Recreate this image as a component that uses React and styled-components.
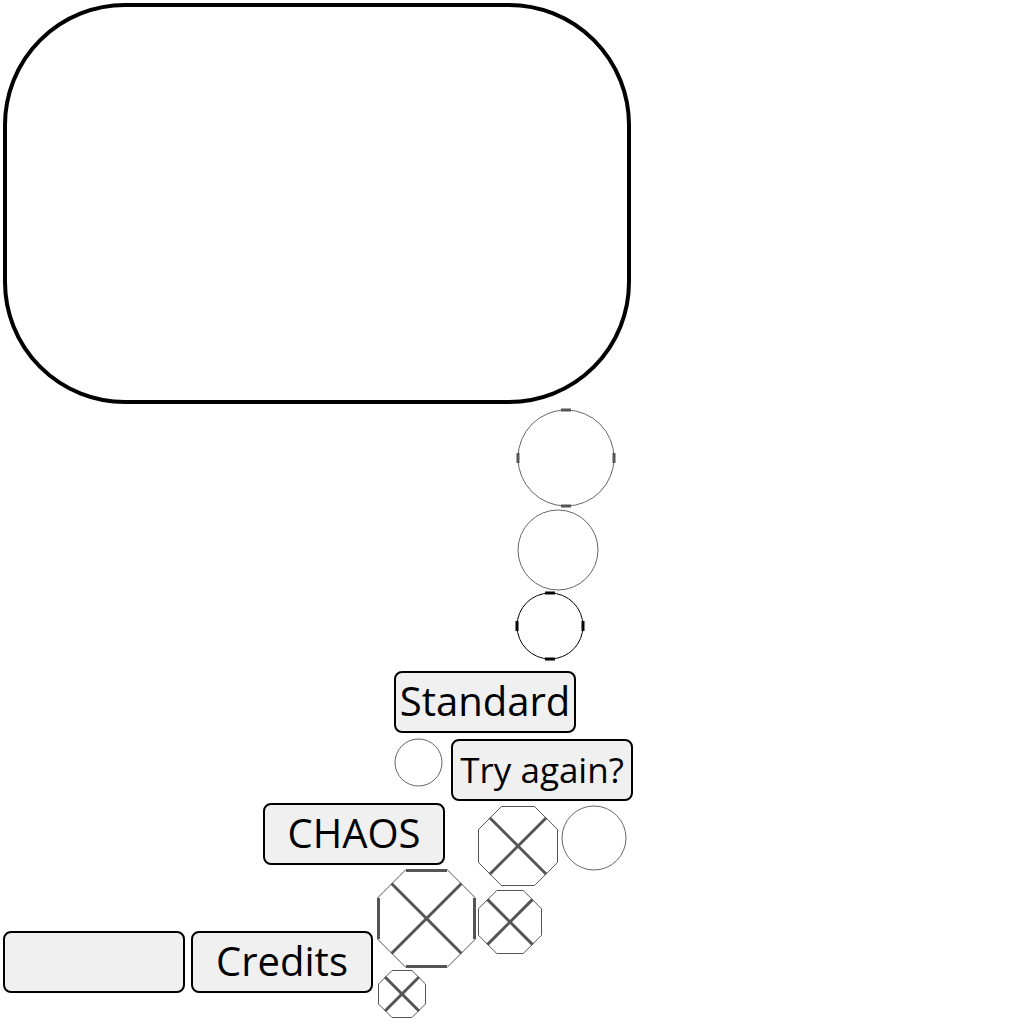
import styled, { createGlobalStyle } from "styled-components";

const GlobalStyle = createGlobalStyle`
  html, body {
    margin: 0;
    padding: 0;
    background: #ffffff;
  }
  body {
    font-family: "Open Sans", "Noto Sans", sans-serif;
  }
`;

// pile starts right under the frame (3 + 401 + 3)
const PILE_TOP = 407;

const circles = [
  { id: "a", cx: 566, cy: 458, d: 96, color: "#666", tick: "#555", ticks: true },
  { id: "b", cx: 558, cy: 550, d: 80, color: "#666" },
  { id: "c", cx: 550, cy: 626, d: 66, color: "#000", tick: "#000", ticks: true },
  { id: "d", cx: 418, cy: 762, d: 47, color: "#666" },
  { id: "f", cx: 594, cy: 838, d: 64, color: "#666" },
];

const octagons = [
  { id: "e", x: 478, y: 806, s: 80 },
  { id: "g", x: 377, y: 869, s: 99, heavy: true },
  { id: "h", x: 478, y: 890, s: 64 },
  { id: "i", x: 378, y: 970, s: 48 },
];

const buttons = [
  { id: "std", label: "Standard", x: 394, y: 671, size: 40 },
  { id: "try", label: "Try again?", x: 451, y: 739, size: 35 },
  { id: "chaos", label: "CHAOS", x: 263, y: 803, size: 40 },
  { id: "blank", label: "", x: 3, y: 931, size: 40 },
  { id: "credits", label: "Credits", x: 191, y: 931, size: 40 },
];

const Ball = ({ d, color, tick, ticks }) => {
  const pad = 3;
  const size = d + pad * 2;
  const c = size / 2;
  const r = d / 2;
  return (
    <svg width={size} height={size} viewBox={`0 0 ${size} ${size}`}>
      <circle cx={c} cy={c} r={r} fill="#fff" stroke={color} strokeWidth="1" />
      {ticks && (
        <g fill={tick}>
          <rect x={c - 5} y={c - r - 1.5} width="10" height="3" />
          <rect x={c - 5} y={c + r - 1.5} width="10" height="3" />
          <rect x={c - r - 1.5} y={c - 5} width="3" height="10" />
          <rect x={c + r - 1.5} y={c - 5} width="3" height="10" />
        </g>
      )}
    </svg>
  );
};

const Octagon = ({ s, heavy }) => {
  const k = s / (2 + Math.SQRT2);
  const pts = [
    [k, 0.5], [s - k, 0.5], [s - 0.5, k], [s - 0.5, s - k],
    [s - k, s - 0.5], [k, s - 0.5], [0.5, s - k], [0.5, k],
  ];
  const m = k / 2;
  return (
    <svg width={s} height={s} viewBox={`0 0 ${s} ${s}`}>
      <polygon
        points={pts.map((p) => p.join(",")).join(" ")}
        fill="#fff"
        stroke="#555"
        strokeWidth="1"
      />
      <g stroke="#555" strokeWidth="3">
        <line x1={m} y1={m} x2={s - m} y2={s - m} />
        <line x1={s - m} y1={m} x2={m} y2={s - m} />
      </g>
      {heavy && (
        <g stroke="#555" strokeWidth="3">
          <line x1={k} y1="1.5" x2={s - k} y2="1.5" />
          <line x1={k} y1={s - 1.5} x2={s - k} y2={s - 1.5} />
          <line x1="1.5" y1={k} x2="1.5" y2={s - k} />
          <line x1={s - 1.5} y1={k} x2={s - 1.5} y2={s - k} />
        </g>
      )}
    </svg>
  );
};

const App = () => {
  return (
    <Page>
      <GlobalStyle />
      <Frame />
      <Pile>
        {circles.map((b) => (
          <Body
            key={b.id}
            style={{ left: b.cx - b.d / 2 - 3, top: b.cy - b.d / 2 - 3 - PILE_TOP }}
          >
            <Ball {...b} />
          </Body>
        ))}
        {octagons.map((o) => (
          <Body key={o.id} style={{ left: o.x, top: o.y - PILE_TOP }}>
            <Octagon {...o} />
          </Body>
        ))}
        {buttons.map((b) => (
          <Block
            key={b.id}
            $size={b.size}
            style={{ left: b.x, top: b.y - PILE_TOP }}
          >
            {b.label}
          </Block>
        ))}
      </Pile>
    </Page>
  );
};

export default App;

const Page = styled.div`
  width: 1024px;
  height: 1024px;
  overflow: hidden;
  background: #fff;
`;

const Frame = styled.div`
  box-sizing: border-box;
  margin: 3px;
  width: 628px;
  height: 401px;
  border: 4px solid #000;
  border-radius: 122px;
  background: #fff;
`;

const Pile = styled.div`
  position: relative;
  height: 617px;
`;

const Body = styled.div`
  position: absolute;
  line-height: 0;
`;

const Block = styled.button`
  position: absolute;
  box-sizing: border-box;
  width: 182px;
  height: 62px;
  padding: 0 0 2px;
  display: flex;
  align-items: center;
  justify-content: center;
  background: #f0f0f0;
  border: 2px solid #000;
  border-radius: 8px;
  color: #000;
  font-family: "Open Sans", "Noto Sans", sans-serif;
  font-size: ${(p) => p.$size}px;
  line-height: 1;
  cursor: pointer;
`;
